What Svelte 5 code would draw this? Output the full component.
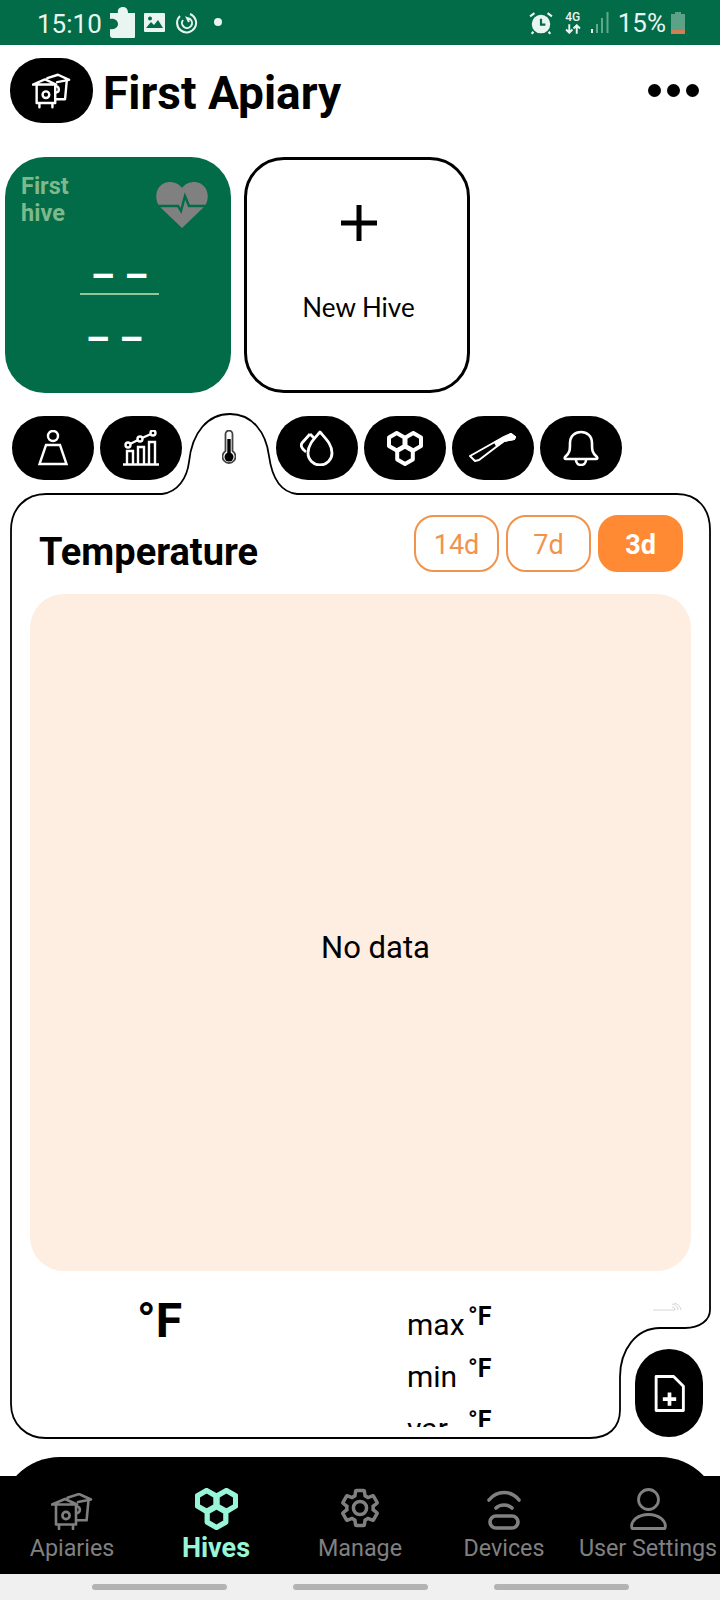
<script>
    const ranges = [
        { label: "14d", active: false },
        { label: "7d", active: false },
        { label: "3d", active: true }
    ];
    const stats = ["max", "min", "var"];
</script>

{#snippet hiveIcon(w, h)}
    <svg width={w} height={h} viewBox="0 0 42 37" fill="none" stroke="currentColor" stroke-width="2.6" stroke-linejoin="round" stroke-linecap="round">
        <path d="M1 11.5 L14 6 L26 11.5 Z" />
        <path d="M5 12 V31.5 H25 V12" />
        <circle cx="15" cy="22.5" r="3.6" />
        <path d="M8 32 V36 M22 32 V36" />
        <path d="M16.5 4.7 L28 1 L40 6.5 L27 9" />
        <path d="M37.4 8 L35.6 27.3 H26" />
        <path d="M26.5 13.5 A3.4 3.4 0 0 1 26.5 20" />
    </svg>
{/snippet}

{#snippet combIcon(w, h, sw)}
    <svg width={w} height={h} viewBox="0 0 36 35" fill="none" stroke="currentColor" stroke-width={sw} stroke-linejoin="round">
        <path d="M9.7 2 L17.5 6.5 V15 L9.7 19.5 L2 15 V6.5 Z" />
        <path d="M26.3 2 L34 6.5 V15 L26.3 19.5 L18.5 15 V6.5 Z" />
        <path d="M18 15.5 L25.8 20 V28.5 L18 33 L10.2 28.5 V20 Z" />
    </svg>
{/snippet}

<div class="page">
    <div class="status">
        <span class="time">15:10</span>
        <svg class="puzzle" width="25" height="31" viewBox="0 0 25 31" fill="#e9f5f0">
            <path d="M0 6 H8 C7 2 10 0 13 0 C16 0 18 2 18 6 H25 V30 Q25 31 24 31 H3 Q0 31 0 28 V22 C5 23 8 20 8 17 C8 14 5 11 0 12 Z" />
        </svg>
        <svg class="pic" width="21" height="19" viewBox="0 0 21 19">
            <rect width="21" height="19" rx="1" fill="#e9f5f0" />
            <path d="M2 15 L7 9 L10 12 L14 7 L19 15 Z" fill="#026b47" />
            <circle cx="6" cy="5.5" r="2" fill="#026b47" />
        </svg>
        <svg class="sync" width="22" height="22" viewBox="0 0 22 22" fill="none" stroke="#e9f5f0" stroke-width="2">
            <path d="M14 2 A9.5 9.5 0 1 1 4 4" />
            <path d="M7 8 A5 5 0 1 0 14 7 L11 6 L13 10" />
        </svg>
        <span class="dot"></span>
        <div class="spacer"></div>
        <svg class="alarm" width="24" height="24" viewBox="0 0 22 22">
            <circle cx="11" cy="12" r="8.5" fill="#e9f5f0" />
            <path d="M11 7 V12.5 H15" fill="none" stroke="#026b47" stroke-width="2" />
            <path d="M1 5 L5 2 M21 5 L17 2 M4 19 L2.5 21 M18 19 L19.5 21" stroke="#e9f5f0" stroke-width="2" />
        </svg>
        <div class="net">
            <span>4G</span>
            <svg width="16" height="10" viewBox="0 0 15 9" fill="none" stroke="#e9f5f0" stroke-width="1.8">
                <path d="M4 0 V8 M1 5 L4 8 L7 5 M11 9 V1 M8 4 L11 1 L14 4" />
            </svg>
        </div>
        <svg class="signal" width="18" height="21" viewBox="0 0 18 21">
            <rect x="0" y="17" width="2" height="4" fill="#e9f5f0" />
            <rect x="5" y="12" width="2" height="9" fill="#5fa98d" />
            <rect x="10" y="6" width="2" height="15" fill="#5fa98d" />
            <rect x="15.5" y="0" width="2" height="21" fill="#5fa98d" />
        </svg>
        <span class="pct">15%</span>
        <svg class="batt" width="14" height="22" viewBox="0 0 14 22">
            <path d="M4 0 H10 V2 H14 V22 H0 V2 H4 Z" fill="#5ba286" />
            <rect y="18" width="14" height="4" fill="#d27f51" />
        </svg>
    </div>

    <header class="top">
        <div class="logo">{@render hiveIcon(39, 36)}</div>
        <h1>First Apiary</h1>
        <div class="more"><i></i><i></i><i></i></div>
    </header>

    <div class="hives">
        <div class="hive">
            <div class="hive-head">
                <span class="hive-name">First<br />hive</span>
                <svg width="52" height="46" viewBox="0 0 52 46">
                    <path d="M26 46 L3 24 C-3 14 1 1 13 0 C19 0 23 2 26 6 C29 2 33 0 39 0 C51 1 55 14 49 24 Z" fill="#808080" />
                    <path d="M0 24 H22 L25 29 L29 14 L33 24 H52" fill="none" stroke="#026b47" stroke-width="2.4" />
                </svg>
            </div>
            <div class="dashes">– –</div>
            <div class="rule"></div>
            <div class="dashes low">– –</div>
        </div>
        <div class="new-hive">
            <svg width="36" height="36" viewBox="0 0 36 36" stroke="#000" stroke-width="5">
                <path d="M0 18 H36 M18 0 V36" />
            </svg>
            <span>New Hive</span>
        </div>
    </div>

    <div class="board">
        <svg class="outline" width="720" height="1040" viewBox="0 405 720 1040" fill="none" stroke="#000" stroke-width="1.8">
            <path d="M11 530 C11 508 26 494 46 494 H162 C178 492 187 478 189 462 C192 432 208 414 230 414 C252 414 266 432 269 456 C272 478 280 492 297 494 H677 C697 494 710 508 710 530 V1310 C710 1320 700 1328 685 1328 H660 C636 1328 620 1350 620 1377 V1410 C620 1428 608 1438 590 1438 H46 C26 1438 11 1424 11 1404 Z" />
        </svg>

        <div class="tabs">
            <div class="tab">
                <svg width="30" height="36" viewBox="0 0 30 36" fill="none" stroke="#fff" stroke-width="2.4">
                    <circle cx="15" cy="6" r="5" />
                    <path d="M8 15 H22 L28.5 34 H1.5 Z" />
                </svg>
            </div>
            <div class="tab">
                <svg width="38" height="36" viewBox="0 0 38 36" fill="none" stroke="#fff" stroke-width="2.4">
                    <path d="M1 34.5 H37" />
                    <path d="M5 34 V21 H11 V34 M16 34 V17 H22 V34 M27 34 V12 H33 V34" />
                    <circle cx="6" cy="15" r="2.5" />
                    <circle cx="18" cy="9" r="2.5" />
                    <circle cx="31" cy="3" r="2.5" />
                    <path d="M8 14 L16 10 M20 8 L29 4" />
                </svg>
            </div>
            <div class="tab active">
                <svg width="14" height="36" viewBox="0 0 14 36" fill="none">
                    <path d="M3.5 21 V4 A3.5 3.5 0 0 1 10.5 4 V21 A6.5 6.5 0 1 1 3.5 21 Z" stroke="#444" stroke-width="1.8" />
                    <path d="M7 9 V24" stroke="#000" stroke-width="3.4" />
                    <circle cx="7" cy="27" r="4.5" fill="#000" />
                </svg>
            </div>
            <div class="tab">
                <svg width="34" height="36" viewBox="0 0 34 36" fill="none" stroke="#fff" stroke-width="2.8" stroke-linejoin="round">
                    <path d="M20 2 C25 8 32 14 32 23 A12 12 0 0 1 8 23 C8 14 15 8 20 2 Z" />
                    <path d="M10 4 L2 13 C0 16 2 19 6 22" />
                    <path d="M10 4 L14 8" />
                </svg>
            </div>
            <div class="tab">{@render combIcon(36, 35, 4)}</div>
            <div class="tab">
                <svg width="48" height="30" viewBox="0 0 48 30" fill="none" stroke="#fff" stroke-width="2" stroke-linejoin="round">
                    <path d="M1 23 L33 5 L42 1 L46 4 L45 6 L35 8 L10 27 L6 28 Z" />
                    <path d="M26 9.5 L42 1 L46 4 L45 6 L35 8 L28 13 Z" fill="#fff" />
                </svg>
            </div>
            <div class="tab">
                <svg width="36" height="36" viewBox="0 0 36 36" fill="none" stroke="#fff" stroke-width="2.6" stroke-linejoin="round">
                    <path d="M2 27 C7 23 7 20 7 13 C7 6 12 2 18 2 C24 2 29 6 29 13 C29 20 29 23 34 27 Q35 29 33 29 H3 Q1 29 2 27 Z" />
                    <path d="M13 30 A5 5 0 0 0 23 30" />
                </svg>
            </div>
        </div>

        <div class="panel">
            <div class="panel-head">
                <h2>Temperature</h2>
                <div class="ranges">
                    {#each ranges as r}
                        <button class:on={r.active}>{r.label}</button>
                    {/each}
                </div>
            </div>
            <div class="chart">No data</div>
            <div class="readout">
                <div class="current">°F</div>
                <div class="stats">
                    {#each stats as s}
                        <div class="stat"><span>{s}</span><b>°F</b></div>
                    {/each}
                </div>
            </div>
            <svg class="mark" width="29" height="8" viewBox="0 0 29 8" fill="none" stroke="#ccc" stroke-width="0.8">
                <path d="M0 7 H22 M22 7 A3 3 0 0 0 19 4 M25 7 A6 6 0 0 0 19 1 M28 7 A9 9 0 0 0 21 0" />
            </svg>
        </div>

        <div class="fab">
            <svg width="31" height="37" viewBox="0 0 30 36" fill="none" stroke="#fff" stroke-width="2.8" stroke-linejoin="round">
                <path d="M2 1.5 H19 L28.5 11 V34.5 H2 Z" />
                <path d="M15 17 V30 M8.5 23.5 H21.5" stroke-width="3.6" />
            </svg>
        </div>
    </div>

    <nav class="nav">
        <div class="nav-inner">
            <div class="item">
                <div class="ico">{@render hiveIcon(42, 37)}</div>
                <span>Apiaries</span>
            </div>
            <div class="item sel">
                <div class="ico">{@render combIcon(43, 42, 4.4)}</div>
                <span>Hives</span>
            </div>
            <div class="item">
                <div class="ico">
                    <svg width="44" height="44" viewBox="0 0 24 24" fill="none" stroke="currentColor" stroke-width="1.9">
                        <path d="M19.14 12.94c.04-.3.06-.61.06-.94 0-.32-.02-.64-.07-.94l2.03-1.58c.18-.14.23-.41.12-.61l-1.92-3.32c-.12-.22-.37-.29-.59-.22l-2.39.96c-.5-.38-1.03-.7-1.62-.94l-.36-2.54c-.04-.24-.24-.41-.48-.41h-3.84c-.24 0-.43.17-.47.41l-.36 2.54c-.59.24-1.13.57-1.62.94l-2.39-.96c-.22-.08-.47 0-.59.22L2.74 8.87c-.12.21-.08.47.12.61l2.03 1.58c-.05.3-.09.63-.09.94s.02.64.07.94l-2.03 1.58c-.18.14-.23.41-.12.61l1.92 3.32c.12.22.37.29.59.22l2.39-.96c.5.38 1.03.7 1.62.94l.36 2.54c.05.24.24.41.48.41h3.84c.24 0 .44-.17.47-.41l.36-2.54c.59-.24 1.13-.56 1.62-.94l2.39.96c.22.08.47 0 .59-.22l1.92-3.32c.12-.22.07-.47-.12-.61l-2.01-1.58zM12 15.6c-1.98 0-3.6-1.62-3.6-3.6s1.62-3.6 3.6-3.6 3.6 1.62 3.6 3.6-1.62 3.6-3.6 3.6z" />
                    </svg>
                </div>
                <span>Manage</span>
            </div>
            <div class="item">
                <div class="ico">
                    <svg width="34" height="40" viewBox="0 0 34 40" fill="none" stroke="currentColor" stroke-width="3.6" stroke-linecap="round">
                        <path d="M2 10 C10 0 24 0 32 10" />
                        <path d="M9 18 C13 14 21 14 25 18" />
                        <rect x="3" y="26" width="28" height="12" rx="6" />
                    </svg>
                </div>
                <span>Devices</span>
            </div>
            <div class="item">
                <div class="ico">
                    <svg width="37" height="42" viewBox="0 0 37 42" fill="none" stroke="currentColor" stroke-width="2.8">
                        <circle cx="18.5" cy="11.5" r="10" />
                        <path d="M2 40.5 C0 33 8 26.5 18.5 26.5 C29 26.5 37 33 35 40.5 Z" stroke-linejoin="round" />
                    </svg>
                </div>
                <span>User Settings</span>
            </div>
        </div>
    </nav>

    <div class="gesture"><i></i><i></i><i></i></div>
</div>

<style>
    :global(body) {
        margin: 0;
        background: #fff;
    }

    .page {
        width: 720px;
        height: 1600px;
        overflow: hidden;
        display: flex;
        flex-direction: column;
        font-family: Roboto, sans-serif;
        color: #000;
    }

    .status {
        flex: 0 0 45px;
        box-sizing: border-box;
        background: #026b47;
        color: #e9f5f0;
        display: flex;
        align-items: center;
        padding: 0 35px 0 37px;
    }

    .time {
        font-size: 26px;
        line-height: 30px;
        margin-top: 2px;
        margin-right: 8px;
    }

    .puzzle {
        margin-right: 9px;
        margin-top: 0;
    }

    .pic {
        margin-right: 11px;
    }

    .dot {
        width: 8px;
        height: 8px;
        border-radius: 50%;
        background: #e9f5f0;
        margin-left: 16px;
        margin-bottom: 1px;
    }

    .spacer {
        flex: 1;
    }

    .alarm {
        margin-right: 12px;
    }

    .net {
        display: flex;
        flex-direction: column;
        align-items: center;
        font-size: 12px;
        font-weight: 500;
        line-height: 13px;
        margin-right: 10px;
    }

    .net svg {
        display: block;
    }

    .signal {
        margin-right: 9px;
    }

    .pct {
        font-size: 26px;
        margin-right: 5px;
    }

    .top {
        flex: 0 0 112px;
        box-sizing: border-box;
        display: flex;
        align-items: flex-start;
        padding: 13px 21px 0 10px;
    }

    .logo {
        width: 83px;
        height: 65px;
        border-radius: 32px;
        background: #000;
        color: #fff;
        display: flex;
        align-items: center;
        justify-content: center;
    }

    h1 {
        margin: 9px 0 0 10px;
        font-size: 46px;
        line-height: 52px;
        font-weight: 700;
        flex: 1;
    }

    .more {
        display: flex;
        gap: 6px;
        margin-top: 26px;
    }

    .more i {
        width: 13px;
        height: 13px;
        border-radius: 50%;
        background: #000;
    }

    .hives {
        flex: 0 0 236px;
        display: flex;
        gap: 13px;
        padding-left: 5px;
    }

    .hive {
        width: 226px;
        box-sizing: border-box;
        background: #026b47;
        border-radius: 40px;
        padding: 16px 23px 0 16px;
        color: #fff;
        display: flex;
        flex-direction: column;
        align-items: center;
    }

    .hive-head {
        width: 100%;
        display: flex;
        justify-content: space-between;
        align-items: flex-start;
        height: 83px;
    }

    .hive-head svg {
        margin-top: 9px;
    }

    .hive-name {
        font-size: 23.5px;
        font-weight: 700;
        line-height: 27px;
        color: #7db98a;
    }

    .dashes {
        font-size: 38px;
        font-weight: 700;
        line-height: 36px;
        margin: 2px 0 0 10px;
    }

    .dashes.low {
        margin: 26px 0 0 0;
    }

    .rule {
        width: 79px;
        height: 2px;
        background: #8fc79a;
        margin-top: -1px;
        margin-left: 10px;
    }

    .new-hive {
        width: 226px;
        box-sizing: border-box;
        border: 3px solid #000;
        border-radius: 40px;
        display: flex;
        flex-direction: column;
        align-items: center;
        padding: 45px 0 0 3px;
    }

    .new-hive span {
        font-family: Lato, sans-serif;
        font-size: 26px;
        margin-top: 50px;
    }

    .board {
        position: relative;
        margin-top: 12px;
        flex: 0 0 1040px;
    }

    .outline {
        position: absolute;
        left: 0;
        top: 0;
    }

    .tabs {
        position: relative;
        display: flex;
        gap: 6px;
        padding: 11px 0 0 12px;
    }

    .tab {
        width: 82px;
        height: 64px;
        border-radius: 32px;
        background: #000;
        color: #fff;
        display: flex;
        align-items: center;
        justify-content: center;
    }

    .tab.active {
        background: none;
    }

    .panel {
        position: relative;
        margin: 13px 10px 0;
        height: 934px;
        padding-top: 22px;
        box-sizing: border-box;
    }

    .panel-head {
        display: flex;
        justify-content: space-between;
        align-items: flex-end;
        padding: 0 27px 0 29px;
        height: 57px;
    }

    h2 {
        margin: 0;
        font-size: 38px;
        line-height: 40px;
        font-weight: 700;
    }

    .ranges {
        display: flex;
        gap: 7px;
    }

    button {
        width: 85px;
        height: 57px;
        box-sizing: border-box;
        border: 2px solid #f0934d;
        border-radius: 20px;
        background: #fff;
        color: #f0934d;
        font-family: Roboto, sans-serif;
        font-size: 27px;
        padding: 3px 0 0;
    }

    button.on {
        background: #ff8a33;
        border-color: #ff8a33;
        color: #fff;
        font-weight: 700;
    }

    .chart {
        margin: 22px 19px 0 20px;
        height: 677px;
        box-sizing: border-box;
        padding: 30px 0 0 30px;
        border-radius: 34px;
        background: #fdeee1;
        display: flex;
        align-items: center;
        justify-content: center;
        font-size: 31px;
    }

    .readout {
        display: flex;
        height: 156px;
        overflow: hidden;
    }

    .current {
        width: 397px;
        box-sizing: border-box;
        padding: 23px 0 0 127px;
        font-size: 48px;
        line-height: 54px;
        font-weight: 700;
    }

    .stat {
        height: 52px;
        display: flex;
        align-items: flex-start;
        padding-top: 13px;
        box-sizing: border-box;
    }

    .stats {
        padding-top: 21px;
    }

    .stat span {
        width: 61px;
        font-size: 30px;
        line-height: 40px;
    }

    .stat b {
        font-size: 25px;
        line-height: 28px;
        margin-top: -2px;
    }

    .mark {
        position: absolute;
        left: 643px;
        top: 810px;
    }

    .fab {
        position: absolute;
        left: 635px;
        top: 944px;
        width: 68px;
        height: 88px;
        border-radius: 34px;
        background: #000;
        display: flex;
        align-items: center;
        justify-content: center;
    }

    .nav {
        flex: 0 0 117px;
        margin-top: 12px;
        background: linear-gradient(#fff 19px, #000 19px);
    }

    .nav-inner {
        height: 117px;
        border-radius: 60px 60px 0 0;
        background: #000;
        display: grid;
        grid-template-columns: repeat(5, 144px);
        color: #808080;
    }

    .item {
        display: flex;
        flex-direction: column;
        align-items: center;
        white-space: nowrap;
        font-size: 23.3px;
    }

    .ico {
        height: 73px;
        display: flex;
        align-items: flex-end;
    }

    .item span {
        line-height: 30px;
        margin-top: 3px;
    }

    .sel {
        color: #98f5d8;
        font-weight: 700;
    }

    .sel span {
        font-size: 27px;
    }

    .gesture {
        flex: 1;
        background: #f0f0f0;
        display: flex;
        justify-content: center;
        align-items: center;
        gap: 66px;
    }

    .gesture i {
        width: 135px;
        height: 6px;
        border-radius: 3px;
        background: #b3b3b3;
    }
</style>
